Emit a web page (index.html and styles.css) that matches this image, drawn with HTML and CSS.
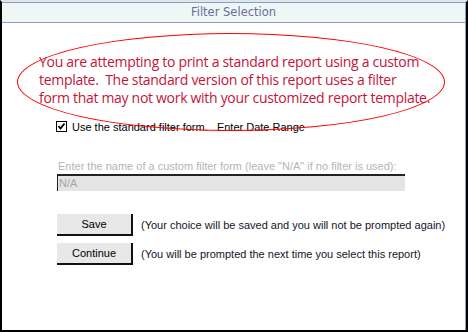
FILE: index.html
```html
<!DOCTYPE html>
<html lang="en">
<head>
  <meta charset="UTF-8">
  <title>Filter Selection</title>
  <link rel="stylesheet" href="styles.css">
</head>
<body>
  <div class="window">
    <div class="titlebar">Filter Selection</div>

    <div class="content">
      <p class="warning">You are attempting to print a standard report using a custom<br>template.&nbsp; The standard version of this report uses a filter<br>form that may not work with your customized report template.</p>

      <div class="form">
        <label class="check-row">
          <svg class="checkbox" width="11" height="11" viewBox="0 0 11 11">
            <rect x="0.5" y="0.5" width="10" height="10" fill="#fff" stroke="#000"/>
            <path d="M2.5 5 L4.5 7.5 L8.5 2.5" fill="none" stroke="#000" stroke-width="1.8"/>
          </svg>
          <span>Use the standard filter form.&nbsp;&nbsp; Enter Date Range</span>
        </label>

        <div class="custom-label">Enter the name of a custom filter form (leave "N/A" if no filter is used):</div>
        <div class="custom-input">N/A</div>

        <div class="action-row first">
          <button class="btn">Save</button>
          <span class="hint">(Your choice will be saved and you will not be prompted again)</span>
        </div>
        <div class="action-row">
          <button class="btn">Continue</button>
          <span class="hint">(You will be prompted the next time you select this report)</span>
        </div>
      </div>

      <!-- red annotation circled over the warning -->
      <div class="ring"></div>
    </div>
  </div>
</body>
</html>
```

FILE: styles.css
```css
* {
  margin: 0;
  padding: 0;
  box-sizing: border-box;
}

body {
  width: 468px;
  height: 332px;
  background: #fff;
  font-family: 'Liberation Sans', Arial, sans-serif;
  font-size: 11px;
  color: #000;
  overflow: hidden;
}

.window {
  width: 468px;
  height: 332px;
  border-left: 2px solid #000;
  border-right: 2px solid #000;
  border-bottom: 2px solid #000;
  border-top: 2px solid #dfe5ea;
  display: flex;
  flex-direction: column;
}

.titlebar {
  height: 21px;
  background: #eef6f6;
  border-top: 1px solid #8aa0c0;
  border-bottom: 1px solid #8aa0c0;
  border-right: 1px solid #8aa0c0;
  color: #6c6c9e;
  font-family: 'DejaVu Sans', Verdana, sans-serif;
  font-size: 11.5px;
  line-height: 19px;
  text-align: center;
}

.content {
  flex: 1;
  position: relative;
  border-right: 1px solid #8aa0c0;
  padding-left: 37px;
}

.warning {
  margin-top: 30px;
  white-space: nowrap;
  color: #c4143c;
  font-family: 'Open Sans', sans-serif;
  font-size: 14px;
  line-height: 18px;
  letter-spacing: -0.3px;
}

.form {
  padding-left: 17px;
}

.check-row {
  display: flex;
  align-items: center;
  gap: 5px;
  margin-top: 13px;
  height: 13px;
}

.checkbox {
  display: block;
}

.custom-label {
  margin-top: 27px;
  padding-left: 2px;
  line-height: 13px;
  color: #b4b4b4;
}

.custom-input {
  width: 348px;
  height: 17px;
  margin-top: 1px;
  margin-left: 1px;
  background: #e4e4e4;
  border-top: 2px solid #222;
  border-left: 1px solid #222;
  padding-left: 1px;
  line-height: 14px;
  color: #a4a4a4;
}

.action-row {
  display: flex;
  align-items: center;
  gap: 8px;
  margin-top: 7px;
  margin-left: 1px;
}

.action-row.first {
  margin-top: 23px;
}

.btn {
  width: 76px;
  height: 22px;
  background: #e8e8e8;
  border: none;
  border-right: 2px solid #111;
  border-bottom: 2px solid #111;
  font-family: 'Liberation Sans', Arial, sans-serif;
  font-size: 11px;
  color: #000;
}

.hint {
  color: #141428;
}

.ring {
  position: absolute;
  left: 15px;
  top: 10px;
  width: 428px;
  height: 98px;
  border: 1px solid #f00;
  border-radius: 50%;
  pointer-events: none;
}
```
